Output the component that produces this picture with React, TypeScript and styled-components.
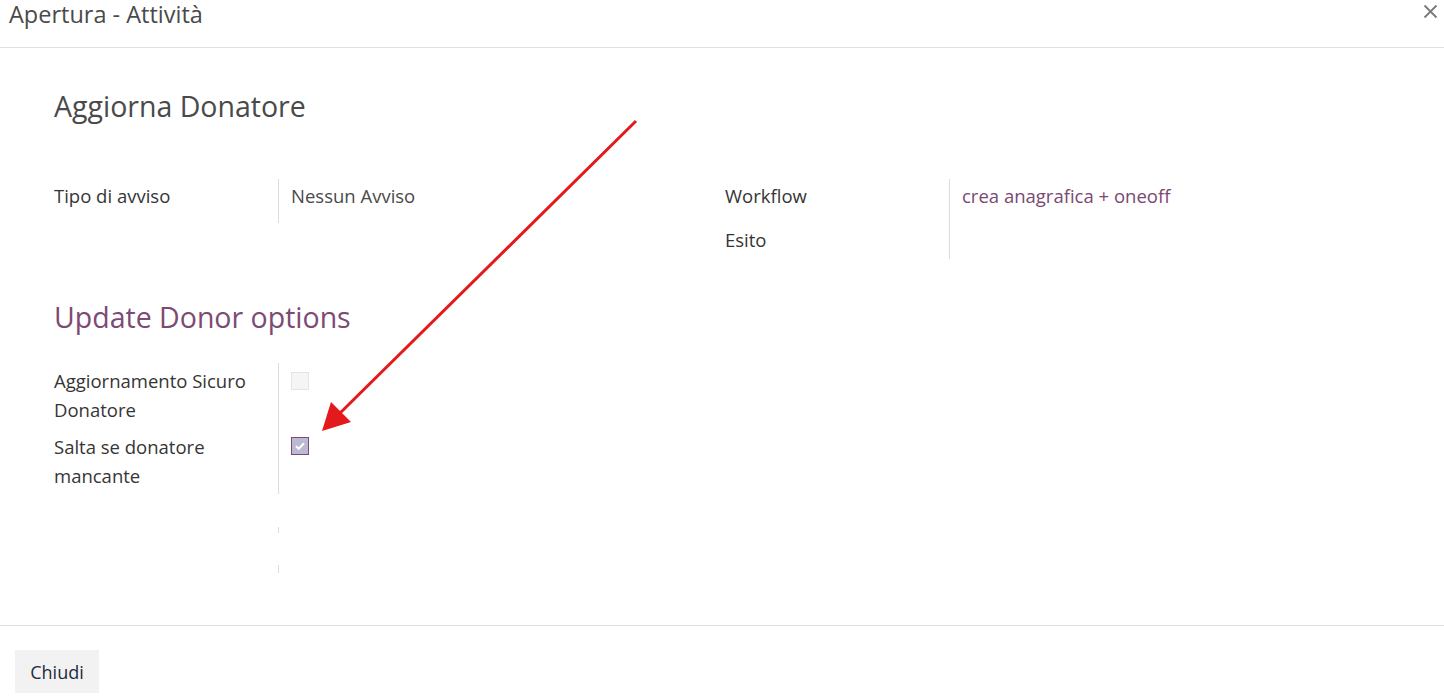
import React from "react";
import styled, { createGlobalStyle } from "styled-components";

const GlobalStyle = createGlobalStyle`
  html, body {
    margin: 0;
    padding: 0;
    background: #fff;
  }
  body {
    font-family: "Open Sans", "Noto Sans", sans-serif;
    color: #4a4a4a;
  }
`;

const Modal = styled.div`
  position: relative;
  width: 1444px;
  height: 700px;
  overflow: hidden;
  display: flex;
  flex-direction: column;
`;

const Header = styled.div`
  height: 48px;
  border-bottom: 1px solid #dee2e6;
  display: flex;
  justify-content: space-between;
  align-items: flex-start;
  padding: 0 6px 0 9px;
  box-sizing: border-box;
`;

const Title = styled.h4`
  margin: 0;
  padding-top: 2px;
  font-size: 23.5px;
  font-weight: 400;
  line-height: 24px;
  color: #4a4a4a;
`;

const CloseButton = styled.button`
  border: none;
  background: none;
  padding: 0;
  margin-top: 4px;
  width: 15px;
  height: 15px;
  cursor: pointer;
`;

const Body = styled.div`
  flex: 1;
  padding: 40px 54px 0;
  box-sizing: border-box;
`;

const SheetTitle = styled.h1`
  margin: 0;
  font-size: 28.5px;
  font-weight: 400;
  line-height: 36px;
  color: #4a4a4a;
`;

const Groups = styled.div`
  display: grid;
  grid-template-columns: 671px 1fr;
  margin-top: 55px;
`;

const Group = styled.div`
  display: flex;
  flex-direction: column;
`;

const Row = styled.div<{ $h: number }>`
  display: grid;
  grid-template-columns: 224px 1fr;
  height: ${({ $h }) => $h}px;
`;

const Label = styled.div<{ $lh?: number }>`
  font-size: 18.5px;
  font-weight: 500;
  color: #353535;
  line-height: ${({ $lh }) => $lh ?? 24}px;
  padding-top: ${({ $lh }) => ($lh ? 3 : 5)}px;
  padding-right: 12px;
`;

const Value = styled.div<{ $link?: boolean }>`
  border-left: 1px solid #dcdcdc;
  padding: 5px 0 0 12px;
  font-size: 18.5px;
  line-height: 24px;
  color: ${({ $link }) => ($link ? "#7a4873" : "#4a4a4a")};
`;

const SectionTitle = styled.h2`
  margin: 40px 0 0;
  font-size: 28.5px;
  font-weight: 400;
  line-height: 36px;
  color: #7c4a74;
`;

const Options = styled.div`
  margin-top: 28px;
  width: 671px;
`;

const CheckCell = styled.div<{ $top: number }>`
  border-left: 1px solid #dcdcdc;
  padding: ${({ $top }) => $top}px 0 0 12px;
`;

const Box = styled.span<{ $checked?: boolean }>`
  display: flex;
  align-items: center;
  justify-content: center;
  width: 18px;
  height: 18px;
  box-sizing: border-box;
  border: 1px solid ${({ $checked }) => ($checked ? "#7c4a74" : "#e4e4e4")};
  background: ${({ $checked }) => ($checked ? "#bcb9d3" : "#f5f5f5")};
`;

const Spacer = styled.div<{ $h: number }>`
  height: ${({ $h }) => $h}px;
`;

const Footer = styled.div`
  height: 75px;
  border-top: 1px solid #dee2e6;
  padding: 24px 15px 0;
  box-sizing: border-box;
`;

const Button = styled.button`
  width: 84px;
  height: 43px;
  border: none;
  background: #f2f2f2;
  font-family: "Open Sans", "Noto Sans", sans-serif;
  font-size: 18px;
  color: #1f2a3c;
  cursor: pointer;
`;

const Annotation = styled.svg`
  position: absolute;
  left: 0;
  top: 0;
  pointer-events: none;
`;

const Check = () => (
  <svg width="10" height="8" viewBox="0 0 10 8">
    <path d="M1 4.2 L3.8 6.8 L9 1.2" fill="none" stroke="#fff" strokeWidth="2" />
  </svg>
);

const App: React.FC = () => (
  <>
    <GlobalStyle />
    <Modal>
      <Header>
        <Title>Apertura - Attività</Title>
        <CloseButton aria-label="close">
          <svg width="15" height="15" viewBox="0 0 15 15">
            <path d="M1.5 1.5 L13.5 13.5 M13.5 1.5 L1.5 13.5" stroke="#7a7a7a" strokeWidth="1.8" />
          </svg>
        </CloseButton>
      </Header>
      <Body>
        <SheetTitle>Aggiorna Donatore</SheetTitle>
        <Groups>
          <Group>
            <Row $h={44}>
              <Label>Tipo di avviso</Label>
              <Value>Nessun Avviso</Value>
            </Row>
          </Group>
          <Group>
            <Row $h={44}>
              <Label>Workflow</Label>
              <Value $link>crea anagrafica + oneoff</Value>
            </Row>
            <Row $h={36}>
              <Label>Esito</Label>
              <Value />
            </Row>
          </Group>
        </Groups>
        <SectionTitle>Update Donor options</SectionTitle>
        <Options>
          <Row $h={66}>
            <Label $lh={29}>Aggiornamento Sicuro Donatore</Label>
            <CheckCell $top={9}>
              <Box />
            </CheckCell>
          </Row>
          <Row $h={65}>
            <Label $lh={29}>Salta se donatore mancante</Label>
            <CheckCell $top={8}>
              <Box $checked>
                <Check />
              </Box>
            </CheckCell>
          </Row>
          <Spacer $h={33} />
          <Row $h={6}>
            <Label />
            <Value />
          </Row>
          <Spacer $h={32} />
          <Row $h={8}>
            <Label />
            <Value />
          </Row>
        </Options>
      </Body>
      <Footer>
        <Button>Chiudi</Button>
      </Footer>
      <Annotation width="1444" height="700">
        <line x1="636" y1="121" x2="335" y2="418" stroke="#e3191b" strokeWidth="3" />
        <polygon points="322,431 331,402 351,422" fill="#e3191b" />
      </Annotation>
    </Modal>
  </>
);

export default App;
